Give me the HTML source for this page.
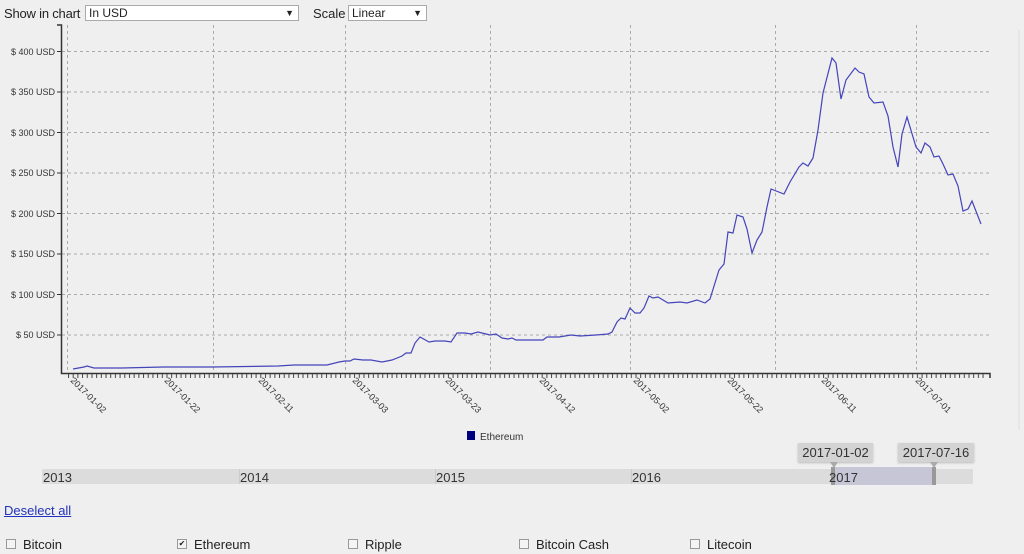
<!DOCTYPE html>
<html><head><meta charset="utf-8"><style>
body{margin:0;width:1024px;height:554px;background:#efefef;font-family:"Liberation Sans",sans-serif;position:relative;overflow:hidden;color:#222}
.a{position:absolute}
.sel{position:absolute;top:5px;height:16px;background:#fff;border:1px solid #aaa;box-sizing:border-box;font-size:12px;line-height:14px;padding-left:3px}
.sel:after{content:"▼";position:absolute;right:4px;top:0;font-size:9px}
.cb{position:absolute;top:538px;font-size:13px;line-height:14px}
.cb i{display:inline-block;width:8px;height:8px;border:1px solid #999;background:#f4f4f4;margin-right:7px;vertical-align:0;font-style:normal;font-size:8px;line-height:8px;text-align:center;overflow:hidden}
.tip{position:absolute;top:443px;height:19px;background:#d3d3d3;font-size:13px;line-height:19px;text-align:center;color:#333;box-shadow:0 1px 2px #bbb}
.yr{position:absolute;top:471px;font-size:13px;line-height:14px;color:#333}
</style></head><body>
<div class="a" style="left:4px;top:6px;font-size:13px;line-height:16px;letter-spacing:-0.2px">Show in chart</div>
<div class="sel" style="left:85px;width:214px">In USD</div>
<div class="a" style="left:313px;top:6px;font-size:13px;line-height:16px">Scale</div>
<div class="sel" style="left:348px;width:79px">Linear</div>
<svg class="a" style="left:0;top:0" width="1024" height="460">
<defs><pattern id="tk" x="68" y="0" width="4.69" height="10" patternUnits="userSpaceOnUse"><rect x="0" y="0" width="1" height="10" fill="#444"/></pattern></defs>
<line x1="1019" y1="30" x2="1019" y2="430" stroke="#ddd"/>
<g stroke="#aaa" stroke-dasharray="3,3" stroke-width="1">
<line x1="62" x2="990" y1="51.5" y2="51.5"/><line x1="62" x2="990" y1="92" y2="92"/><line x1="62" x2="990" y1="132.5" y2="132.5"/><line x1="62" x2="990" y1="173" y2="173"/><line x1="62" x2="990" y1="213.5" y2="213.5"/><line x1="62" x2="990" y1="254" y2="254"/><line x1="62" x2="990" y1="294.5" y2="294.5"/><line x1="62" x2="990" y1="335" y2="335"/>
<line x1="67.5" x2="67.5" y1="25" y2="373"/><line x1="213.5" x2="213.5" y1="25" y2="373"/><line x1="345.5" x2="345.5" y1="25" y2="373"/><line x1="490.5" x2="490.5" y1="25" y2="373"/><line x1="630.5" x2="630.5" y1="25" y2="373"/><line x1="775.5" x2="775.5" y1="25" y2="373"/><line x1="916.5" x2="916.5" y1="25" y2="373"/>
</g>
<path d="M57 25H61.5V373.5H990V378" fill="none" stroke="#333" stroke-width="1.5"/>
<rect x="68" y="374" width="918" height="4" fill="url(#tk)"/>
<g stroke="#333"><line x1="57" x2="62" y1="51.5" y2="51.5"/><line x1="57" x2="62" y1="92" y2="92"/><line x1="57" x2="62" y1="132.5" y2="132.5"/><line x1="57" x2="62" y1="173" y2="173"/><line x1="57" x2="62" y1="213.5" y2="213.5"/><line x1="57" x2="62" y1="254" y2="254"/><line x1="57" x2="62" y1="294.5" y2="294.5"/><line x1="57" x2="62" y1="335" y2="335"/></g>
<g font-size="9" fill="#333" text-anchor="end" font-family="Liberation Sans">
<text x="55" y="55">$ 400 USD</text><text x="55" y="95">$ 350 USD</text><text x="55" y="136">$ 300 USD</text><text x="55" y="176">$ 250 USD</text><text x="55" y="217">$ 200 USD</text><text x="55" y="257">$ 150 USD</text><text x="55" y="298">$ 100 USD</text><text x="55" y="338">$ 50 USD</text>
</g>
<g font-size="9" fill="#333" font-family="Liberation Sans">
<text transform="translate(70,381) rotate(45)">2017-01-02</text>
<text transform="translate(164,381) rotate(45)">2017-01-22</text>
<text transform="translate(258,381) rotate(45)">2017-02-11</text>
<text transform="translate(352,381) rotate(45)">2017-03-03</text>
<text transform="translate(445,381) rotate(45)">2017-03-23</text>
<text transform="translate(539,381) rotate(45)">2017-04-12</text>
<text transform="translate(633,381) rotate(45)">2017-05-02</text>
<text transform="translate(727,381) rotate(45)">2017-05-22</text>
<text transform="translate(821,381) rotate(45)">2017-06-11</text>
<text transform="translate(915,381) rotate(45)">2017-07-01</text>
</g>
<polyline fill="none" stroke="#4444bb" stroke-width="1.2" points="73,369 84,367 87,366 94,368 122,368 163,367 212,367 278,366 294,365 327,365 339,362 345,361 350,361 354,359 363,360 371,360 382,362 392,360 402,356 406,353 411,353 415,343 420,337 429,342 435,341 445,341 451,342 457,333 465,333 471,334 478,332 486,334 490,335 496,334 502,338 508,339 512,338 516,340 531,340 543,340 547,337 559,337 571,335 580,336 596,335 608,334 612,332 617,322 621,318 625,319 630,308 635,313 640,313 644,308 649,296 653,298 658,297 668,303 680,302 687,303 697,300 705,303 710,299 719,270 724,264 728,232 733,233 737,215 743,217 747,229 752,253 757,240 762,232 767,207 771,189 784,194 790,182 799,167 803,163 808,166 813,158 818,130 823,93 832,58 836,63 841,99 846,80 855,68 859,72 864,74 869,97 874,103 883,102 888,116 893,147 898,167 902,134 907,117 916,147 921,153 925,143 930,147 934,157 939,156 943,164 948,175 953,174 958,186 963,211 968,209 972,201 981,224"/>
<rect x="467" y="431" width="8" height="9" fill="#000080"/>
<text x="480" y="440" font-size="10" fill="#333" font-family="Liberation Sans">Ethereum</text>
</svg>
<div class="a" style="left:42px;top:469px;width:931px;height:15px;background:#dcdcdc"></div>
<div class="a" style="left:831px;top:467px;width:104px;height:18px;background:#c6c6d6"></div>
<div class="a" style="left:831px;top:467px;width:4px;height:18px;background:#999"></div>
<div class="a" style="left:932px;top:467px;width:4px;height:18px;background:#999"></div>
<div class="a" style="left:239px;top:469px;width:1px;height:15px;background:#ccc"></div>
<div class="a" style="left:435px;top:469px;width:1px;height:15px;background:#ccc"></div>
<div class="a" style="left:631px;top:469px;width:1px;height:15px;background:#ccc"></div>
<div class="yr" style="left:43px">2013</div><div class="yr" style="left:240px">2014</div><div class="yr" style="left:436px">2015</div><div class="yr" style="left:632px">2016</div><div class="yr" style="left:829px">2017</div>
<div class="tip" style="left:798px;width:75px">2017-01-02</div>
<div class="tip" style="left:898px;width:76px">2017-07-16</div>
<div class="a" style="left:830px;top:462px;width:0;height:0;border-left:4px solid transparent;border-right:4px solid transparent;border-top:6px solid #aaa"></div>
<div class="a" style="left:930px;top:462px;width:0;height:0;border-left:4px solid transparent;border-right:4px solid transparent;border-top:6px solid #aaa"></div>
<div class="a" style="left:4px;top:504px;font-size:13px;line-height:14px;color:#2233bb;text-decoration:underline">Deselect all</div>
<div class="cb" style="left:6px"><i></i>Bitcoin</div>
<div class="cb" style="left:177px"><i>✔</i>Ethereum</div>
<div class="cb" style="left:348px"><i></i>Ripple</div>
<div class="cb" style="left:519px"><i></i>Bitcoin Cash</div>
<div class="cb" style="left:690px"><i></i>Litecoin</div>
</body></html>
